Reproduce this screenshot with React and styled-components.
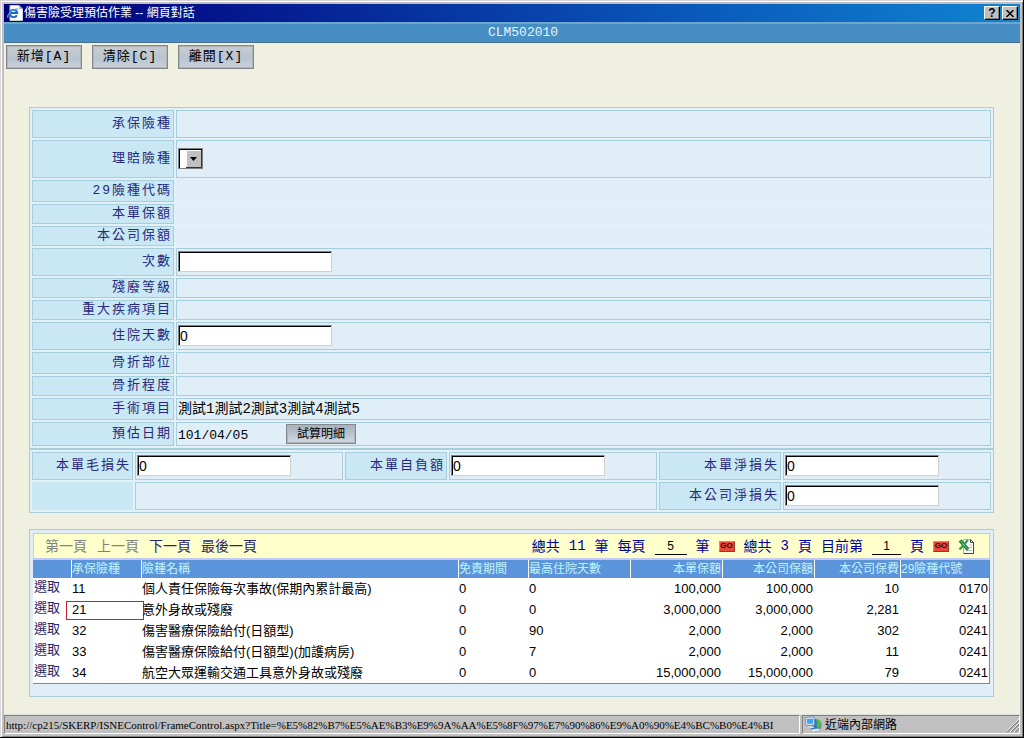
import React from "react";
import styled, { createGlobalStyle } from "styled-components";

const sans = '"Liberation Sans", "Noto Sans CJK TC", sans-serif';
const mono = '"Liberation Mono", "Noto Sans CJK TC", monospace';
const serif = '"Liberation Serif", "Noto Sans CJK TC", serif';

const GlobalStyle = createGlobalStyle`
  * { box-sizing: border-box; }
  body { margin: 0; background: #c0c0c0; font-family: ${sans}; }
`;

const Frame = styled.div`
  min-height: 100vh;
  display: flex;
  flex-direction: column;
  background: #c0c0c0;
  border-right: 1px solid #000;
  border-bottom: 1px solid #000;
  padding: 4px 3px 3px 4px;
  box-shadow: inset 1px 1px 0 #d8d4d8, inset 2px 2px 0 #fff, inset -1px -1px 0 #808080;
`;

const TitleBar = styled.header`
  display: flex;
  align-items: center;
  height: 18px;
  padding: 0 2px 0 3px;
  gap: 1px;
  background: linear-gradient(90deg, #00007c 0%, #04148c 20%, #0a5cbc 70%, #1084d0 100%);
`;

const WindowTitle = styled.h1`
  flex: 1;
  margin: 0;
  color: #fff;
  font: 400 12px/18px ${sans};
  white-space: nowrap;
`;

const WindowButton = styled.button`
  display: flex;
  align-items: center;
  justify-content: center;
  width: 16px;
  height: 14px;
  padding: 0;
  margin-left: 1px;
  background: #c0c0c0;
  border: 1px solid;
  border-color: #fff #000 #000 #fff;
  box-shadow: inset -1px -1px 0 #808080;
  color: #000;
  font: 700 12px/12px ${sans};
`;

const ProgramBar = styled.div`
  height: 21px;
  border-top: 2px solid #6ea6cc;
  border-bottom: 1px solid #44708e;
  background: #468ec4;
  color: #e8f4fc;
  font: 400 13px/17px ${mono};
  text-align: center;
  padding-left: 22px;
`;

const Page = styled.main`
  flex: 1;
  background: #f0f0e0;
  padding: 2px 26px 17px 25px;
`;

const Toolbar = styled.div`
  display: flex;
  gap: 10px;
  margin: 0 0 38px -23px;
`;

const ToolButton = styled.button`
  width: ${(p) => (p.$small ? "70px" : "76px")};
  height: ${(p) => (p.$small ? "20px" : "24px")};
  padding: 0;
  border: 1px solid #84888c;
  box-shadow: inset 0 0 0 1px #b0b4b8;
  background: ${(p) =>
    p.$small
      ? "linear-gradient(#a8b0bc, #d0d8e4)"
      : "linear-gradient(#c8ccd0, #b8c4d0 60%, #ccd4dc)"};
  color: #000;
  font-family: ${(p) => (p.$small ? sans : mono)};
  font-size: ${(p) => (p.$small ? "12px" : "13px")};
  line-height: 16px;
  letter-spacing: ${(p) => (p.$small ? "normal" : "1px")};
  white-space: nowrap;
`;

const Panel = styled.section`
  border: 1px solid #a8cede;
  background: #dfeef7;
`;

const FormPanel = styled(Panel)`
  background: #e2f1f8;
  margin-bottom: 16px;
`;

const FieldGroup = styled.div`
  display: flex;
  flex-direction: column;
  gap: 2px;
  padding: 2px;
`;

const FieldRow = styled.div`
  display: grid;
  grid-template-columns: 142px 1fr;
  gap: 2px;
  min-height: ${(p) => p.$height}px;
`;

const LossGrid = styled.div`
  display: grid;
  grid-template-columns: 101px 1fr 102px 1fr 122px 1fr;
  grid-auto-rows: 28px;
  gap: 2px;
  padding: 2px;
  border-top: 2px solid #a8cede;
`;

const labelLook = `
  display: flex;
  align-items: center;
  justify-content: flex-end;
  border: 1px solid #a8cede;
  background: #c9e8f4;
  padding-right: 1px;
  color: #28287c;
  font: 400 13px/16px ${mono};
  letter-spacing: 2px;
  white-space: nowrap;
`;

const FieldLabel = styled.label`${labelLook}`;
const FieldName = styled.div`${labelLook}`;
const BlankName = styled.div`background: #c9e8f4;`;

const FieldValue = styled.div`
  display: flex;
  align-items: center;
  padding: 0 1px 1px;
  border: 1px solid ${(p) => (p.$plain ? "transparent" : "#a8cede")};
  background: #dfeef7;
  font: 400 ${(p) => (p.$large ? "14px" : "13px")}/16px ${mono};
  color: #000;
  ${(p) => p.$wide && "grid-column: span 3;"}
`;

const DateText = styled.time`
  width: 108px;
  padding-top: 4px;
`;

const TextInput = styled.input`
  width: 154px;
  height: 21px;
  padding: 1px;
  border: 1px solid;
  border-color: #808080 #d0d0d0 #d0d0d0 #808080;
  border-radius: 0;
  box-shadow: inset 1px 1px 0 #000;
  background: #fff;
  color: #000;
  font: 400 14px/16px ${sans};
`;

const SelectBox = styled.div`
  display: grid;
  width: 25px;
  height: 21px;
  & > * { grid-area: 1 / 1; }
  & > svg { pointer-events: none; }
`;

const Select = styled.select`
  appearance: none;
  width: 25px;
  height: 21px;
  padding: 0;
  border: 1px solid #808080;
  border-radius: 0;
  box-shadow: inset 1px 1px 0 #000;
  background: #fff;
`;

const GridPanel = styled(Panel)`
  padding: 3px 3px 12px;
`;

const Pager = styled.div`
  display: flex;
  align-items: center;
  height: 27px;
  padding: 0 15px 0 11px;
  border: 1px solid #c4c8f0;
  border-bottom-width: 2px;
  background: #ffffcc;
  font: 400 14px/18px ${sans};
  color: #0000a0;
  white-space: nowrap;
`;

const PageLinks = styled.nav`
  display: flex;
  gap: 10px;
  flex: 1;
`;

const PageLink = styled.a`
  color: ${(p) => (p.$off ? "#848480" : "#28286c")};
  text-decoration: none;
`;

const PageInfo = styled.div`
  display: flex;
  align-items: center;
  gap: 9px;
`;

const Count = styled.span`
  font-family: ${mono};
`;

const PageInput = styled.input`
  width: ${(p) => (p.$short ? "29px" : "32px")};
  height: 17px;
  padding: 0;
  border: 0;
  border-bottom: 1px solid #000;
  background: transparent;
  text-align: center;
  font: 400 12px/14px ${sans};
`;

const GoButton = styled.button`
  width: 16px;
  height: 11px;
  padding: 0;
  border: 1px solid;
  border-color: #f08070 #a83028 #a83028 #f08070;
  background: #e84838;
  color: #400000;
  font: 700 8px/8px ${sans};
`;

const ExcelButton = styled.button`
  width: 16px;
  height: 16px;
  padding: 0;
  border: 0;
  background: none;
  line-height: 0;
`;

const DataTable = styled.table`
  width: 100%;
  table-layout: fixed;
  border-collapse: separate;
  border-spacing: 0;
  background: #fff;
  border-right: 1px solid #808890;
  border-bottom: 1px solid #808890;
`;

const HeadCell = styled.th`
  height: 18px;
  padding: 0 1px 0 0;
  background: #5c94dc;
  border-left: ${(p) => (p.$first ? "0" : "1px solid #fff")};
  color: #c0f4fc;
  font: 400 12px/18px ${sans};
  text-align: ${(p) => (p.$right ? "right" : "left")};
  white-space: nowrap;
`;

const Cell = styled.td`
  position: relative;
  height: 21px;
  padding: 0 1px;
  color: #000;
  font: 400 13px/20px ${sans};
  text-align: ${(p) => (p.$right ? "right" : "left")};
  white-space: nowrap;
`;

const PickLink = styled.a`
  display: block;
  padding-bottom: 4px;
  line-height: 17px;
  color: #28286c;
  text-decoration: none;
`;

const Marker = styled.span`
  position: absolute;
  inset: 2px -3px 0 -5px;
  border: 1px solid #c82030;
`;

const StatusBar = styled.footer`
  display: flex;
  height: 20px;
  border-top: 1px solid #e0e0e0;
  gap: 2px;
`;

const StatusPane = styled.div`
  display: flex;
  align-items: center;
  gap: 3px;
  overflow: hidden;
  border: 1px solid;
  border-color: #808080 #fff #fff #808080;
  color: #000;
  white-space: nowrap;
  ${(p) => (p.$zone ? "flex: 0 0 218px;" : "flex: 1; min-width: 0;")}
  padding-left: 1px;
  font: 400 ${(p) => (p.$zone ? "12px" : "11px")}/16px ${(p) => (p.$zone ? sans : serif)};
`;

const Spacer = styled.span`flex: 1;`;

const PageIcon = () => (
  <svg width="16" height="16" viewBox="0 0 16 16" aria-hidden="true">
    <path d="M3 .5h9l3.500 3.500v11.500H3z" fill="#fff" stroke="#c8ccd8" strokeWidth="1" />
    <path d="M12 .5v3.500h3.500z" fill="#a8b4c8" />
    <path d="M9.800 10.200a3.700 3.700 0 1 1 .4-2.200H4" fill="none" stroke="#1c68c0" strokeWidth="2" />
    <path d="M1.500 12.500C-.5 12.500 1 8.500 5 5.800c3-2 6-2.500 6-1" fill="none" stroke="#60a4e0" strokeWidth="1.200" />
  </svg>
);

const ExcelIcon = () => (
  <svg width="16" height="16" viewBox="0 0 16 16" aria-hidden="true">
    <path d="M5.500 1.500h7l3 3v11h-10z" fill="#fff" stroke="#b0b4b0" />
    <path d="M12.500 1.500l3 3v11h-10" fill="none" stroke="#404848" />
    <path d="M12.500 1.500v3h3" fill="none" stroke="#404848" />
    <path d="M11 7h3M11 9.500h3M8 12.500h6" stroke="#b0bcb4" />
    <path d="M2 2.500l8 9" stroke="#1c7c30" strokeWidth="3.400" />
    <path d="M10 2l-8.500 9.500" stroke="#38a04c" strokeWidth="2.400" />
    <path d="M2 2.500l7.500 8.500" stroke="#a8d8b0" strokeWidth=".7" />
  </svg>
);

const NetworkIcon = () => (
  <svg width="18" height="17" viewBox="0 0 18 17" aria-hidden="true">
    <circle cx="11.500" cy="9" r="6" fill="#2478d0" />
    <path d="M12 3c3.500.4 5.500 3 5.500 6l-2.500 3.500-2.500-2 .5-3z" fill="#58b448" />
    <path d="M1 1.500l9-.8.500 8.300L2 9.500z" fill="#e4ecf8" stroke="#7c90b4" />
    <path d="M2.500 3l6.500-.6.300 5.100-6 .5z" fill="#38a8f0" />
    <path d="M5 10h4l1 2H4z" fill="#d0d8e4" />
    <path d="M6.500 13.500l8-1 2.500 2-8.500 1.500z" fill="#f0f4f8" stroke="#8894a4" strokeWidth=".6" />
  </svg>
);

const Grip = () => (
  <svg width="12" height="15" viewBox="0 0 12 15" aria-hidden="true">
    <path d="M0 15L12 3M4 15L12 7M8 15L12 11" stroke="#808080" strokeWidth="1.500" />
    <path d="M-1 15L12 2M3 15L12 6M7 15L12 10" stroke="#fff" strokeWidth=".8" />
  </svg>
);

const CloseIcon = () => (
  <svg width="8" height="7" viewBox="0 0 8 7" aria-hidden="true">
    <path d="M.5 0l7 7M7.500 0l-7 7" stroke="#000" strokeWidth="1.500" />
  </svg>
);

const fields = [
  { name: "承保險種", height: 28 },
  { name: "理賠險種", height: 38, kind: "select", id: "claim-type" },
  { name: "29險種代碼", height: 22, plain: true },
  { name: "本單保額", height: 20, plain: true },
  { name: "本公司保額", height: 20, plain: true },
  { name: "次數", height: 28, kind: "input", id: "times", value: "" },
  { name: "殘廢等級", height: 20 },
  { name: "重大疾病項目", height: 20 },
  { name: "住院天數", height: 28, kind: "input", id: "days", value: "0" },
  { name: "骨折部位", height: 22 },
  { name: "骨折程度", height: 20 },
  { name: "手術項目", height: 22, kind: "text", value: "測試1測試2測試3測試4測試5" },
  { name: "預估日期", height: 24, kind: "date", value: "101/04/05" },
];

const columns = [
  { name: "", width: 38 },
  { name: "承保險種", width: 70 },
  { name: "險種名稱" },
  { name: "免責期間", width: 70 },
  { name: "最高住院天數", width: 102 },
  { name: "本單保額", width: 92, right: true },
  { name: "本公司保額", width: 92, right: true },
  { name: "本公司保費", width: 86, right: true },
  { name: "29險種代號", width: 89, rightBody: true },
];

const rows = [
  ["11", "個人責任保險每次事故(保期內累計最高)", "0", "0", "100,000", "100,000", "10", "0170"],
  ["21", "意外身故或殘廢", "0", "0", "3,000,000", "3,000,000", "2,281", "0241"],
  ["32", "傷害醫療保險給付(日額型)", "0", "90", "2,000", "2,000", "302", "0241"],
  ["33", "傷害醫療保險給付(日額型)(加護病房)", "0", "7", "2,000", "2,000", "11", "0241"],
  ["34", "航空大眾運輸交通工具意外身故或殘廢", "0", "0", "15,000,000", "15,000,000", "79", "0241"],
];

const Col = styled.col`
  width: ${(p) => (p.$width ? `${p.$width}px` : "auto")};
`;

function FieldContent({ field }) {
  if (field.kind === "select") {
    return (
      <SelectBox>
        <Select id={field.id}><option value="" /></Select>
        <svg width="25" height="21" viewBox="0 0 25 21" aria-hidden="true">
          <rect x="8" y="2" width="16" height="18" fill="#c0c0c0" />
          <path d="M8.500 19V2.500H23" fill="none" stroke="#fff" />
          <path d="M8 19.500H23.500V2" fill="none" stroke="#303030" />
          <path d="M12 9h7l-3.500 4z" fill="#000" />
        </svg>
      </SelectBox>
    );
  }
  if (field.kind === "input") return <TextInput id={field.id} defaultValue={field.value} />;
  if (field.kind === "date") {
    return (
      <>
        <DateText>{field.value}</DateText>
        <ToolButton type="button" $small>試算明細</ToolButton>
      </>
    );
  }
  return field.value || null;
}

function LossField({ id, name }) {
  return (
    <>
      <FieldLabel htmlFor={id}>{name}</FieldLabel>
      <FieldValue><TextInput id={id} defaultValue="0" /></FieldValue>
    </>
  );
}

export default function App() {
  return (
    <Frame>
      <GlobalStyle />
      <TitleBar>
        <PageIcon />
        <WindowTitle>傷害險受理預估作業 -- 網頁對話</WindowTitle>
        <WindowButton type="button">?</WindowButton>
        <WindowButton type="button" aria-label="關閉"><CloseIcon /></WindowButton>
      </TitleBar>
      <ProgramBar>CLM502010</ProgramBar>
      <Page>
        <Toolbar>
          <ToolButton type="button">新增[A]</ToolButton>
          <ToolButton type="button">清除[C]</ToolButton>
          <ToolButton type="button">離開[X]</ToolButton>
        </Toolbar>

        <FormPanel>
          <FieldGroup>
            {fields.map((field) => (
              <FieldRow key={field.name} $height={field.height}>
                {field.id ? (
                  <FieldLabel htmlFor={field.id}>{field.name}</FieldLabel>
                ) : (
                  <FieldName>{field.name}</FieldName>
                )}
                <FieldValue $plain={field.plain} $large={field.kind === "text"}>
                  <FieldContent field={field} />
                </FieldValue>
              </FieldRow>
            ))}
          </FieldGroup>
          <LossGrid>
            <LossField id="gross-loss" name="本單毛損失" />
            <LossField id="deductible" name="本單自負額" />
            <LossField id="net-loss" name="本單淨損失" />
            <BlankName />
            <FieldValue $wide />
            <LossField id="company-net-loss" name="本公司淨損失" />
          </LossGrid>
        </FormPanel>

        <GridPanel>
          <Pager>
            <PageLinks>
              <PageLink href="#first" $off>第一頁</PageLink>
              <PageLink href="#previous" $off>上一頁</PageLink>
              <PageLink href="#next">下一頁</PageLink>
              <PageLink href="#last">最後一頁</PageLink>
            </PageLinks>
            <PageInfo>
              <span>總共</span>
              <Count>11</Count>
              <span>筆</span>
              <label htmlFor="page-size">每頁</label>
              <PageInput id="page-size" defaultValue="5" />
              <span>筆</span>
              <GoButton type="button">GO</GoButton>
              <span>總共</span>
              <Count>3</Count>
              <span>頁</span>
              <label htmlFor="page-number">目前第</label>
              <PageInput id="page-number" defaultValue="1" $short />
              <span>頁</span>
              <GoButton type="button">GO</GoButton>
              <ExcelButton type="button" aria-label="Excel"><ExcelIcon /></ExcelButton>
            </PageInfo>
          </Pager>
          <DataTable>
            <colgroup>
              {columns.map((c, i) => <Col key={i} $width={c.width} />)}
            </colgroup>
            <thead>
              <tr>
                {columns.map((c, i) => (
                  <HeadCell key={i} $first={i === 0} $right={c.right}>{c.name}</HeadCell>
                ))}
              </tr>
            </thead>
            <tbody>
              {rows.map((row) => (
                <tr key={row[0]}>
                  <Cell><PickLink href={`#${row[0]}`}>選取</PickLink></Cell>
                  {row.map((text, i) => (
                    <Cell key={i} $right={columns[i + 1].right || columns[i + 1].rightBody}>
                      {text}
                      {i === 0 && text === "21" && <Marker />}
                    </Cell>
                  ))}
                </tr>
              ))}
            </tbody>
          </DataTable>
        </GridPanel>
      </Page>
      <StatusBar>
        <StatusPane>
          http://cp215/SKERP/ISNEControl/FrameControl.aspx?Title=%E5%82%B7%E5%AE%B3%E9%9A%AA%E5%8F%97%E7%90%86%E9%A0%90%E4%BC%B0%E4%BI
        </StatusPane>
        <StatusPane $zone>
          <NetworkIcon />
          近端內部網路
          <Spacer />
          <Grip />
        </StatusPane>
      </StatusBar>
    </Frame>
  );
}
